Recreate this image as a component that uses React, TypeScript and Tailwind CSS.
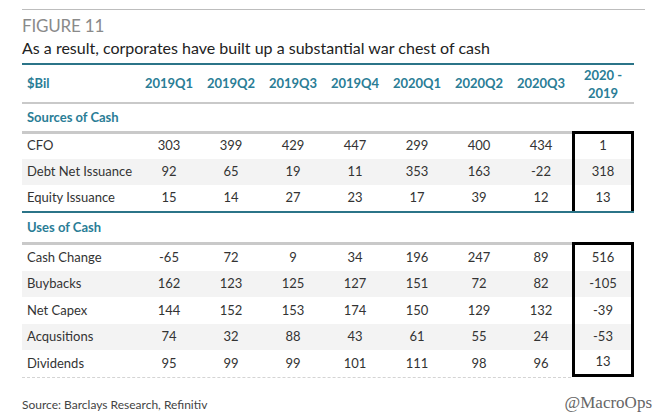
const cols = ['2019Q1', '2019Q2', '2019Q3', '2019Q4', '2020Q1', '2020Q2', '2020Q3']

const sources: [string, ...string[]][] = [
  ['CFO', '303', '399', '429', '447', '299', '400', '434', '1'],
  ['Debt Net Issuance', '92', '65', '19', '11', '353', '163', '-22', '318'],
  ['Equity Issuance', '15', '14', '27', '23', '17', '39', '12', '13'],
]

const uses: [string, ...string[]][] = [
  ['Cash Change', '-65', '72', '9', '34', '196', '247', '89', '516'],
  ['Buybacks', '162', '123', '125', '127', '151', '72', '82', '-105'],
  ['Net Capex', '144', '152', '153', '174', '150', '129', '132', '-39'],
  ['Acqusitions', '74', '32', '88', '43', '61', '55', '24', '-53'],
  ['Dividends', '95', '99', '99', '101', '111', '98', '96', '13'],
]

const grid = 'grid grid-cols-[116px_repeat(8,62px)]'

function Divider({ box }: { box?: boolean }) {
  return (
    <div className={`${grid} h-[2px]`}>
      <div className="col-span-8 bg-[#c9c9c9]" />
      <div className={box ? 'bg-black h-[3px]' : 'bg-[#c9c9c9]'} />
    </div>
  )
}

function DataRows({ rows, closed, rowH }: { rows: [string, ...string[]][]; closed?: boolean; rowH: string }) {
  return (
    <div>
      {rows.map((r, i) => {
        const last = i === rows.length - 1
        return (
          <div key={r[0]} className={`${grid} ${rowH} ${i % 2 === 1 ? 'bg-[#f3f3f3]' : ''}`}>
            <div className="pl-[5px] flex items-center">{r[0]}</div>
            {r.slice(1, 8).map((v, j) => (
              <div key={j} className="flex items-center justify-center">
                {v}
              </div>
            ))}
            <div
              className={`flex items-center justify-center border-x-[3px] border-black ${
                closed && last ? 'border-b-[3px]' : ''
              }`}
            >
              {r[8]}
            </div>
          </div>
        )
      })}
    </div>
  )
}

export default function App() {
  return (
    <div
      className="w-[661px] h-[418px] bg-white text-[#333] text-[13px] overflow-hidden"
      style={{ fontFamily: 'Lato, "Open Sans", sans-serif' }}
    >
      <div className="ml-[22px] w-[623px] mt-[9px] h-px bg-[#bdbdbd]" />
      <div className="ml-[22px] mt-[6px] text-[17px] leading-[20px] text-[#8a8a8a] tracking-[-0.2px]">FIGURE 11</div>
      <div className="ml-[22px] mt-[2px] text-[16px] leading-[20px] text-[#222]">
        As a result, corporates have built up a substantial war chest of cash
      </div>

      <div className="ml-[22px] w-[612px] mt-[5px]">
        <div className="h-[2px] bg-[#2b7488]" />
        {/* header */}
        <div className={`${grid} h-[37px] font-bold text-[#2a7d96]`}>
          <div className="pl-[5px] flex items-center">$Bil</div>
          {cols.map((c) => (
            <div key={c} className="flex items-center justify-center">
              {c}
            </div>
          ))}
          <div className="flex flex-col items-center justify-center leading-[18px]">
            <span>2020 -</span>
            <span>2019</span>
          </div>
        </div>
        <Divider />
        <div className="h-[27px] pl-[5px] flex items-center font-bold text-[#2a7d96]">Sources of Cash</div>
        <Divider box />
        <DataRows rows={sources} rowH="h-[26px]" />
        <div className="h-[2px] bg-[#2b7488]" />
        <div className="h-[29px] pl-[5px] flex items-center font-bold text-[#2a7d96]">Uses of Cash</div>
        <Divider box />
        <DataRows rows={uses} closed rowH="h-[26.6px]" />
        <div className={`${grid}`}>
          <div className="col-span-8 border-t border-dashed border-[#d4d4d4] w-[549px]" />
        </div>
      </div>

      <div className="flex items-start justify-between pl-[22px] pr-[9px] mt-[14px]">
        <div className="text-[12px] leading-[16px] text-[#444] mt-[5px]">Source: Barclays Research, Refinitiv</div>
        <div className="text-[17px] leading-[22px] text-[#666]" style={{ fontFamily: '"Liberation Serif", serif' }}>
          @MacroOps
        </div>
      </div>
    </div>
  )
}
